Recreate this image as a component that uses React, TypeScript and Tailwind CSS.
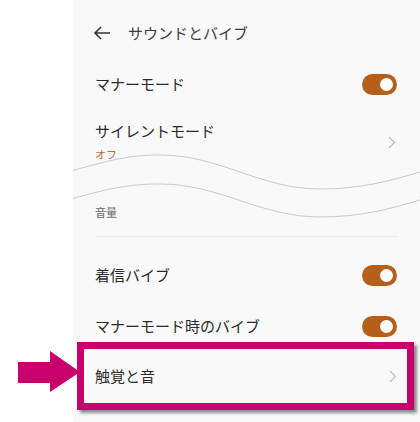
const jp = { fontFamily: '"Noto Sans CJK JP", "Noto Sans", sans-serif' };

function Toggle() {
  return (
    <span className="flex h-[21px] w-[35px] shrink-0 items-center justify-end rounded-full bg-[#b55f1b] pr-[4px]">
      <span className="h-[13px] w-[13px] rounded-full bg-white" />
    </span>
  );
}

function Chevron() {
  return (
    <svg width="8" height="13" viewBox="0 0 8 13" className="shrink-0">
      <polyline points="1,1 6.5,6.5 1,12" fill="none" stroke="#bdbdbd" strokeWidth="1.2" />
    </svg>
  );
}

export default function App() {
  return (
    <div className="relative flex h-[422px] w-[420px] overflow-hidden bg-white text-[#2b2b2b]" style={jp}>
      <div className="w-[73px] shrink-0" />
      <div className="relative flex w-[347px] flex-col bg-[#f9f9f9]">
        <div className="flex h-[66px] items-center pl-[20px]">
          <svg width="18" height="14" viewBox="0 0 18 14">
            <path d="M17 7H2M8 1L2 7l6 6" fill="none" stroke="#333" strokeWidth="1.6" />
          </svg>
          <span className="ml-[17px] text-[15px] leading-[20px] text-[#3c3c3c]">サウンドとバイブ</span>
        </div>

        <div className="flex h-[36px] items-center justify-between pl-[22px] pr-[23px]">
          <span className="text-[15px] leading-[20px]">マナーモード</span>
          <Toggle />
        </div>

        <div className="flex h-[62px] items-start justify-between pl-[22px] pr-[24px]">
          <div className="flex flex-col pt-[19px]">
            <span className="text-[15px] leading-[20px]">サイレントモード</span>
            <span className="mt-[5px] text-[11px] leading-[16px] text-[#c0703a]">オフ</span>
          </div>
          <div className="mt-[34px]">
            <Chevron />
          </div>
        </div>

        <div className="h-[40px]" />

        <div className="pl-[22px] text-[11px] font-medium leading-[16px] text-[#7a7a7a]">音量</div>

        <div className="mx-[22px] mt-[16px] h-px bg-[#ececec]" />

        <div className="mt-[18px] flex h-[40px] items-center justify-between pl-[22px] pr-[23px]">
          <span className="text-[15px] leading-[20px]">着信バイブ</span>
          <Toggle />
        </div>

        <div className="mt-[16px] flex h-[30px] items-center justify-between pl-[22px] pr-[23px]">
          <span className="text-[15px] leading-[20px]">マナーモード時のバイブ</span>
          <Toggle />
        </div>

        <div className="ml-[4px] mr-[6px] mt-[1px] flex h-[68px] items-center justify-between border-[7px] border-[#c9006b] pl-[11px] pr-[10px] shadow-[3px_3px_3px_rgba(0,0,0,0.45)]">
          <span className="text-[15px] leading-[20px]">触覚と音</span>
          <Chevron />
        </div>

        <svg
          className="pointer-events-none absolute left-0 top-[140px]"
          width="347"
          height="90"
          viewBox="73 140 347 90"
        >
          <path
            d="M71 171 C110 160, 130 155, 160 155 C220 155, 260 189, 320 189 C360 189, 390 181, 420 172"
            fill="none"
            stroke="#c9c9c9"
            strokeWidth="1"
          />
          <path
            d="M71 199 C110 188, 130 184, 160 184 C220 184, 260 217, 320 217 C360 217, 390 209, 420 200"
            fill="none"
            stroke="#c9c9c9"
            strokeWidth="1"
          />
        </svg>
      </div>

      <svg className="absolute left-[18px] top-[351px]" width="63" height="42" viewBox="0 0 63 42">
        <polygon points="0,11 32,11 32,0 62,21 32,41 32,32 0,32" fill="#c9006b" />
      </svg>
    </div>
  );
}
